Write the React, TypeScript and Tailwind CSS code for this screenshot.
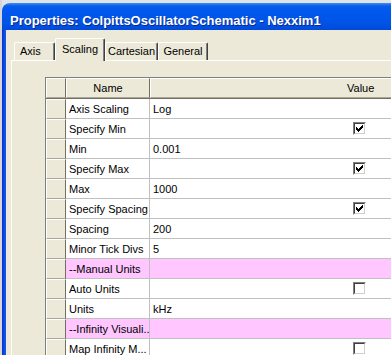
import React from "react";

type Row = {
  name: string;
  value?: string;
  check?: boolean;
  section?: boolean;
};

const ROWS: Row[] = [
  { name: "Axis Scaling", value: "Log" },
  { name: "Specify Min", check: true },
  { name: "Min", value: "0.001" },
  { name: "Specify Max", check: true },
  { name: "Max", value: "1000" },
  { name: "Specify Spacing", check: true },
  { name: "Spacing", value: "200" },
  { name: "Minor Tick Divs", value: "5" },
  { name: "--Manual Units", section: true },
  { name: "Auto Units", check: false },
  { name: "Units", value: "kHz" },
  { name: "--Infinity Visuali...", section: true },
  { name: "Map Infinity M...", check: false },
];

const TABS = [
  { label: "Axis", w: "w-[41px]", left: true },
  { label: "Scaling", w: "w-[50px]", selected: true },
  { label: "Cartesian", w: "w-[53px]" },
  { label: "General", w: "w-[50px]" },
];

function CheckBox({ checked }: { checked: boolean }) {
  return (
    <div className="h-[13px] w-[13px] shrink-0 border border-t-[#808080] border-l-[#808080] border-b-white border-r-white">
      <div className="h-[11px] w-[11px] border border-t-[#404040] border-l-[#404040] border-b-[#d4d0c8] border-r-[#d4d0c8] bg-white">
        {checked ? (
          <svg width="9" height="9" viewBox="0 0 9 9" shapeRendering="crispEdges">
            <path
              fill="#000"
              d="M7 1h1v1h-1z M6 2h2v1h-2z M1 3h1v1h-1z M5 3h3v1h-3z M1 4h2v1h-2z M4 4h3v1h-3z M1 5h5v1h-5z M2 6h3v1h-3z M3 7h1v1h-1z"
            />
          </svg>
        ) : null}
      </div>
    </div>
  );
}

export default function App() {
  return (
    <div className="flex h-[355px] w-[391px] overflow-hidden bg-[#dfe3ea] font-['Liberation_Sans',Arial,sans-serif] text-[11px] leading-[14px] text-black">
      {/* strip of whatever lies behind the window */}
      <div className="w-[2px] shrink-0 bg-[#d6d6d6]" />

      <div className="mt-[3px] flex min-w-0 flex-1 flex-col overflow-hidden rounded-tl-[8px]">
        {/* title bar */}
        <div className="h-[27px] shrink-0 whitespace-nowrap bg-[linear-gradient(to_bottom,#3d8ef7_0px,#0a5ce9_3px,#0058ee_8px,#0054e6_20px,#0049da_27px)] pl-[8px] pt-[9px] text-[13px] font-bold leading-[17px] text-white [text-shadow:1px_1px_#0b2a8c]">
          Properties: ColpittsOscillatorSchematic - Nexxim1
        </div>

        <div className="flex flex-1">
          {/* left window border */}
          <div className="w-[4px] shrink-0 bg-[linear-gradient(to_right,#0a2fd6,#1060e8)]" />

          <div className="flex min-w-0 flex-1 flex-col bg-[#ece9d8] pl-[5px] pt-[8px]">
            {/* tabs */}
            <div className="flex items-end pl-[3px]">
              {TABS.map((t) =>
                t.selected ? (
                  <div
                    key={t.label}
                    className={`relative z-10 -mb-px h-[23px] ${t.w} shrink-0 rounded-t-[2px] border-l border-t border-r border-l-white border-t-white border-r-[#404040] bg-[#ece9d8] pt-[3px] text-center shadow-[inset_-1px_0_#808080]`}
                  >
                    {t.label}
                  </div>
                ) : (
                  <div
                    key={t.label}
                    className={`h-[18px] ${t.w} shrink-0 rounded-t-[2px] border-l border-t border-r border-l-white border-t-white border-r-[#404040] pt-[1px] shadow-[inset_-1px_0_#808080] ${t.left ? "pl-[5px] text-left" : "text-center"}`}
                  >
                    {t.label}
                  </div>
                ),
              )}
            </div>

            {/* tab page */}
            <div className="flex-1 border-l border-t border-white pl-[33px] pt-[16px]">
              <div className="w-max border-l border-t border-[#808080]">
                {/* header */}
                <div className="flex border-b border-[#716f64]">
                  <div className="h-[20px] w-[20px] shrink-0 border-b border-l border-r border-t border-b-[#aca899] border-l-white border-r-[#716f64] border-t-white" />
                  <div className="h-[20px] w-[84px] shrink-0 border-b border-l border-r border-t border-b-[#aca899] border-l-white border-r-[#716f64] border-t-white pt-[2px] text-center">
                    Name
                  </div>
                  <div className="h-[20px] w-[300px] shrink-0 border-b border-l border-t border-b-[#aca899] border-l-white border-t-white pl-[196px] pt-[2px]">
                    Value
                  </div>
                </div>

                {/* body */}
                {ROWS.map((r) => {
                  const bg = r.section ? "bg-[#ffc6ff]" : "bg-white";
                  return (
                    <div key={r.name} className="flex h-[20px]">
                      <div className="w-[20px] shrink-0 border-b border-l border-r border-t border-b-[#aca899] border-l-white border-r-[#716f64] border-t-white bg-[#ece9d8]" />
                      <div
                        className={`flex w-[84px] shrink-0 items-center whitespace-nowrap border-b border-r border-[#c0c0c0] pl-[3px] ${bg}`}
                      >
                        {r.name}
                      </div>
                      <div
                        className={`flex w-[300px] shrink-0 items-center border-b border-[#c0c0c0] ${bg} ${r.check !== undefined ? "pl-[203px]" : "pl-[3px]"}`}
                      >
                        {r.check !== undefined ? <CheckBox checked={r.check} /> : r.value}
                      </div>
                    </div>
                  );
                })}
              </div>
            </div>
          </div>
        </div>
      </div>
    </div>
  );
}
